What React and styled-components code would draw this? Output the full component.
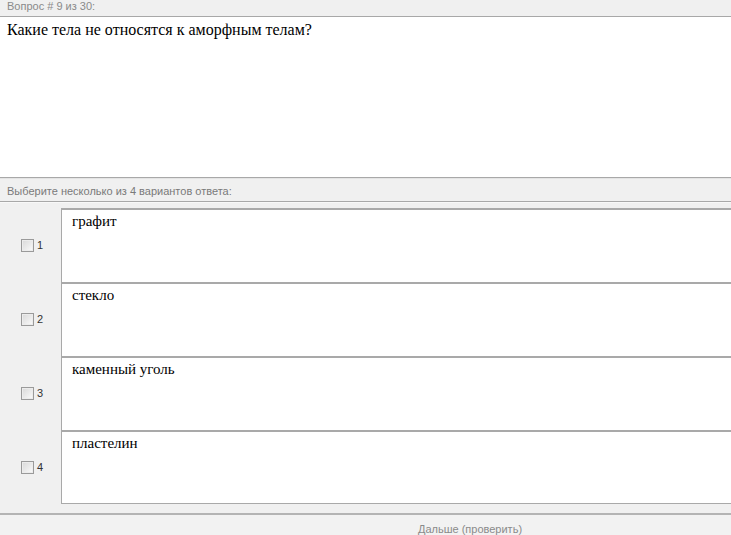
import styled, { createGlobalStyle } from "styled-components";

const Global = createGlobalStyle`
  html, body {
    margin: 0;
    padding: 0;
    background: #f0f0f0;
    overflow: hidden;
  }
`;

const Page = styled.div`
  width: 940px;
  background: #f0f0f0;
  font-family: "Liberation Sans", Arial, sans-serif;
`;

const InfoBar = styled.div`
  height: 16px;
  line-height: 13px;
  padding-left: 7px;
  font-size: 11px;
  color: #8a8a8a;
  border-bottom: 1px solid #a8a8a8;
`;

const Question = styled.div`
  height: 151px;
  padding: 4px 7px 5px;
  background: #fff;
  font-family: "Liberation Serif", "Times New Roman", serif;
  font-size: 16px;
  color: #000;
  border-bottom: 1px solid #a8a8a8;
`;

const HintBar = styled.div`
  height: 22px;
  line-height: 24px;
  padding-left: 7px;
  font-size: 11px;
  color: #7a7a7a;
  border-top: 1px solid #e4e4e4;
  border-bottom: 1px solid #a8a8a8;
`;

const Options = styled.div`
  padding-top: 5px;
  border-top: 1px solid #f8f8f8;
`;

const Row = styled.div`
  display: flex;
  height: 74px;
`;

const Mark = styled.label`
  width: 61px;
  display: flex;
  align-items: center;
  padding-left: 21px;
  box-sizing: border-box;
  gap: 3px;
  font-size: 11px;
  color: #333;
`;

const Check = styled.span`
  width: 11px;
  height: 11px;
  border: 1px solid #9a9a9a;
  background: linear-gradient(135deg, #d8d8d8 0%, #f4f4f4 80%, #fff 100%);
  box-shadow: inset 0 0 0 1px #ececec;
`;

const Answer = styled.div`
  flex: 1;
  background: #fff;
  border-top: 2px solid #a9a9a9;
  border-left: 1px solid #a9a9a9;
  border-bottom: ${(p) => (p.$last ? "1px solid #a9a9a9" : "none")};
  padding: 3px 10px;
  font-family: "Liberation Serif", "Times New Roman", serif;
  font-size: 15px;
  color: #000;
`;

const Footer = styled.div`
  margin-top: 9px;
  border-top: 2px solid #b4b4b4;
  padding-top: 8px;
  height: 12px;
  text-align: center;
  font-size: 11px;
  line-height: 13px;
  color: #8a8a8a;
  background: #f2f2f2;
`;

const answers = ["графит", "стекло", "каменный уголь", "пластелин"];

export default function App() {
  return (
    <Page>
      <Global />
      <InfoBar>Вопрос # 9 из 30:</InfoBar>
      <Question>Какие тела не относятся к аморфным телам?</Question>
      <HintBar>Выберите несколько из 4 вариантов ответа:</HintBar>
      <Options>
        {answers.map((a, i) => (
          <Row key={a}>
            <Mark>
              <Check />
              {i + 1}
            </Mark>
            <Answer $last={i === answers.length - 1}>{a}</Answer>
          </Row>
        ))}
      </Options>
      <Footer>Дальше (проверить)</Footer>
    </Page>
  );
}
